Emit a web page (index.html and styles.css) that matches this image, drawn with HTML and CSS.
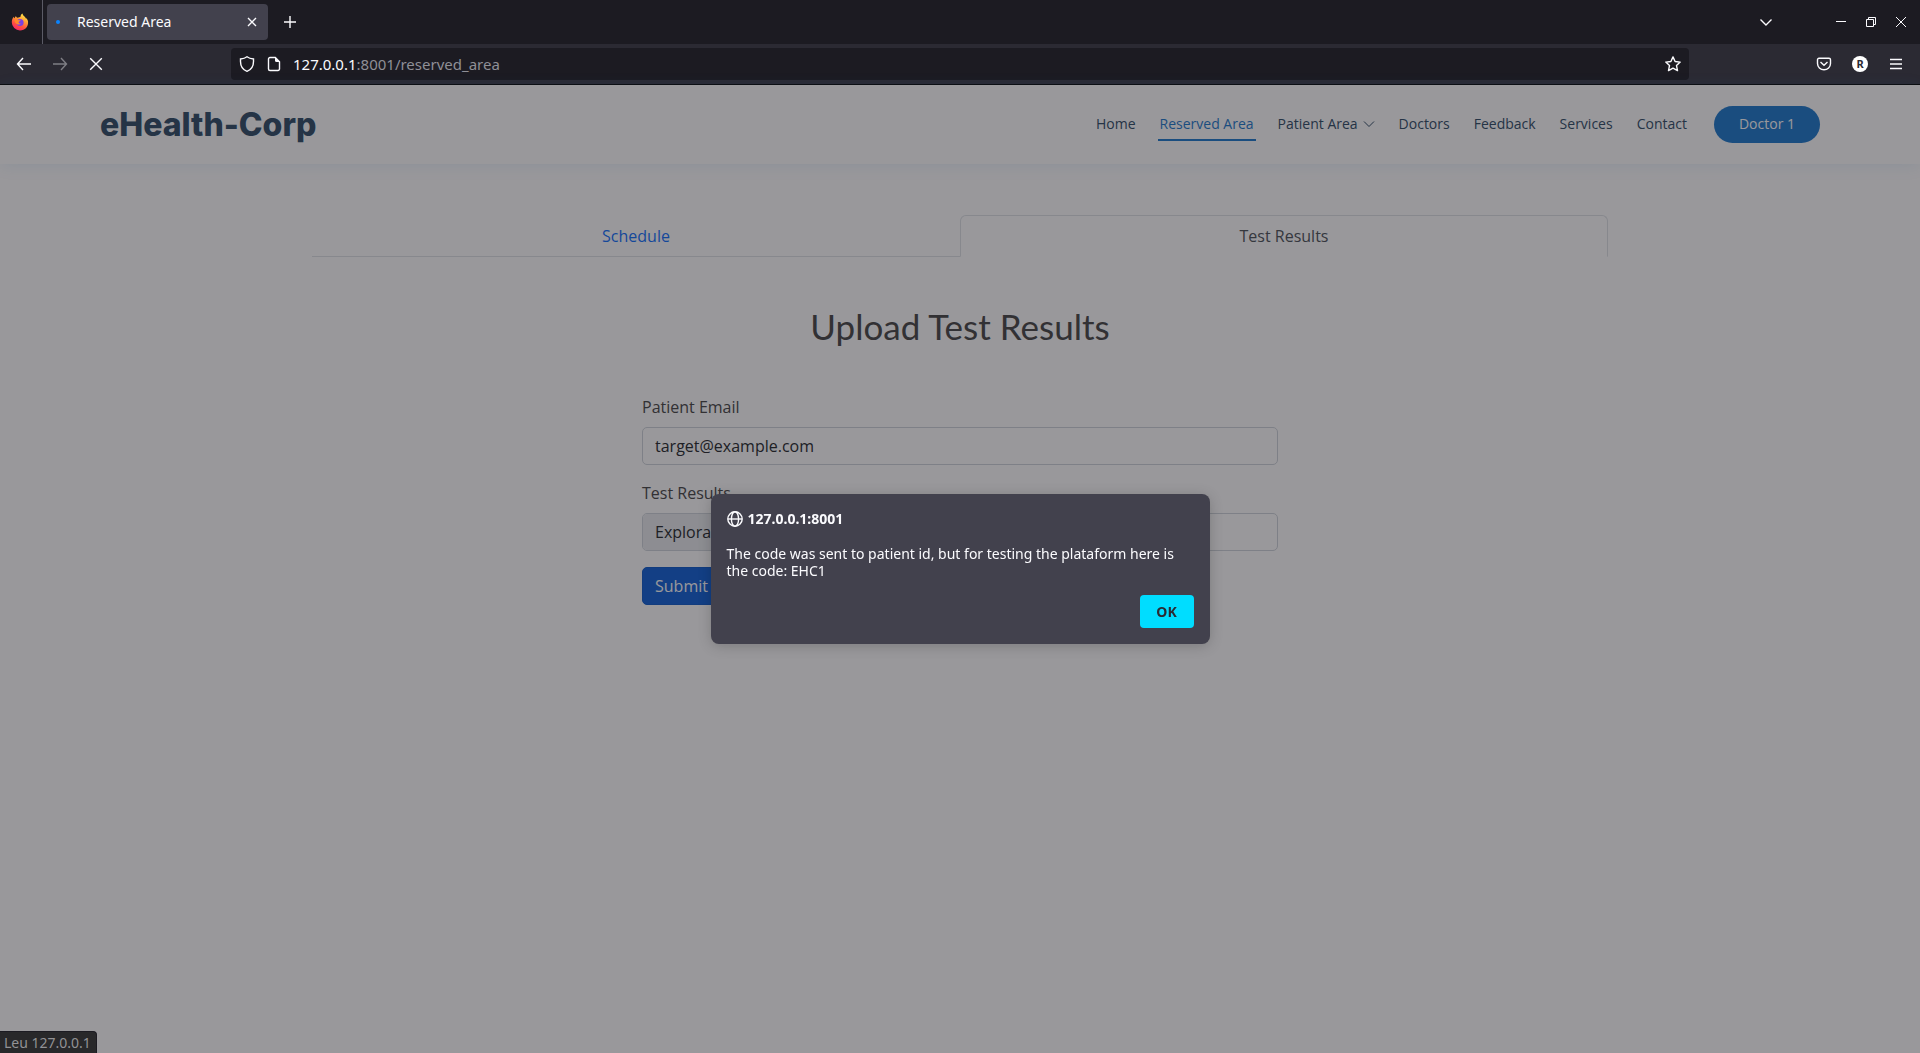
FILE: index.html
```html
<!DOCTYPE html>
<html lang="pt">
<head>
<meta charset="utf-8">
<meta name="viewport" content="width=device-width, initial-scale=1">
<title>Reserved Area</title>
<link rel="stylesheet" href="styles.css">
</head>
<body>
<div class="browser">
  <div class="tabbar">
    <div class="firefox-view">
      <svg width="18" height="18" viewBox="0 0 18 18" aria-hidden="true">
        <defs>
          <linearGradient id="flame" x1="0.8" y1="0" x2="0.3" y2="1">
            <stop offset="0" stop-color="#fff44f"/>
            <stop offset="0.35" stop-color="#ffa436"/>
            <stop offset="0.7" stop-color="#ff4f3f"/>
            <stop offset="1" stop-color="#f5246e"/>
          </linearGradient>
        </defs>
        <path fill="url(#flame)" d="M17 8.2c-.3-1.5-1.200-2.700-2-3.300.2.700.2 1 .2 1.200C14.500 3.600 12 3.300 11.400.6c-1.600 1-1.900 2.700-2 3.500-.9 0-1.800.3-2.600.7C5.500 4.300 5 3.400 5 2.900c-1 .8-1.200 1.900-1.300 2.400-.7-.3-1-.9-1-1.500C1.400 5.300.8 7.300.8 9.300A8.200 8.200 0 0 0 9 17.500c5 0 8.700-4 8-9.300z"/>
        <circle cx="9" cy="9.500" r="3.600" fill="#7b3fe4"/>
        <path fill="#ff8a2a" d="M3.500 6.600c1.600-1 3.300-.5 4.100.6h2c-.2 1.100-1.900 1-2 2 0 1 1.100 1.500 2.200 1.200-.7 1-2 1.500-3.300 1C4.300 10.700 3.500 8.700 3.500 6.600z"/>
      </svg>
    </div>
    <div class="tab">
      <span class="loading-dot"></span>
      <span class="tab-title">Reserved Area</span>
      <button class="icon-button" type="button" aria-label="Close tab">
        <svg width="10" height="10" viewBox="0 0 10 10"><path d="M1 1l8 8M9 1l-8 8"/></svg>
      </button>
    </div>
    <button class="icon-button new-tab" type="button" aria-label="New tab">
      <svg width="12" height="12" viewBox="0 0 12 12"><path d="M6 0v12M0 6h12"/></svg>
    </button>
    <div class="window-controls">
      <button class="icon-button tab-list" type="button" aria-label="List all tabs">
        <svg width="14" height="8" viewBox="0 0 14 8"><path d="M1.500 1.500L7 7l5.500-5.500"/></svg>
      </button>
      <button class="icon-button" type="button" aria-label="Minimize">
        <svg class="thin" width="10" height="10" viewBox="0 0 10 10"><path d="M0 4.500h10"/></svg>
      </button>
      <button class="icon-button" type="button" aria-label="Restore">
        <svg class="thin" width="10" height="10" viewBox="0 0 10 10"><path d="M.5 2.500h7v7h-7zM2.500 2.500v-2h7v7h-2"/></svg>
      </button>
      <button class="icon-button" type="button" aria-label="Close">
        <svg class="thin" width="10" height="10" viewBox="0 0 10 10"><path d="M0 0l10 10M10 0L0 10"/></svg>
      </button>
    </div>
  </div>
  <div class="toolbar">
    <div class="nav-buttons">
      <button class="icon-button" type="button" aria-label="Back">
        <svg width="16" height="14" viewBox="0 0 16 14"><path d="M7 1L1.500 7 7 13M1.500 7H15"/></svg>
      </button>
      <button class="icon-button disabled" type="button" aria-label="Forward" disabled>
        <svg width="16" height="14" viewBox="0 0 16 14"><path d="M9 1l5.500 6L9 13M14.500 7H1"/></svg>
      </button>
      <button class="icon-button" type="button" aria-label="Stop">
        <svg width="14" height="14" viewBox="0 0 14 14"><path d="M1.200 1.200l11.600 11.600M12.800 1.200L1.200 12.800"/></svg>
      </button>
    </div>
    <div class="urlbar">
      <svg width="16" height="16" viewBox="0 0 16 16" aria-hidden="true"><path d="M8 .8C6.500 2 4 2.800 1.500 3v2.500C1.500 10.500 4.500 14 8 15.300c3.500-1.300 6.500-4.800 6.500-9.800V3C12 2.800 9.500 2 8 .8z"/></svg>
      <svg width="14" height="16" viewBox="0 0 14 16" aria-hidden="true"><path d="M8.300 1.500H3A1.500 1.500 0 0 0 1.500 3v10A1.500 1.500 0 0 0 3 14.500h8a1.500 1.500 0 0 0 1.500-1.500V5.700z"/><path class="solid" d="M8 1v3.500A1.500 1.500 0 0 0 9.500 6H13z"/></svg>
      <span class="url"><b>127.0.0.1</b>:8001/reserved_area</span>
      <button class="icon-button" type="button" aria-label="Bookmark this page">
        <svg width="16" height="16" viewBox="0 0 16 16"><path stroke-linejoin="round" d="M8 .9l2.100 4.600 5.100.6-3.700 3.500 1 5L8 12.200l-4.500 2.400 1-5L.8 6.100l5.100-.6z"/></svg>
      </button>
    </div>
    <div class="tools">
      <button class="icon-button" type="button" aria-label="Save to Pocket">
        <svg width="16" height="14" viewBox="0 0 16 14"><path d="M3 1.200h10A1.500 1.500 0 0 1 14.500 2.700V6.500a6.500 6.200 0 0 1-13 0V2.700A1.500 1.500 0 0 1 3 1.200z"/><path d="M4.500 5L8 8.200 11.500 5"/></svg>
      </button>
      <button class="icon-button avatar" type="button">R</button>
      <button class="icon-button" type="button" aria-label="Menu">
        <svg width="12" height="12" viewBox="0 0 12 12"><path d="M0 1.500h12M0 6h12M0 10.500h12"/></svg>
      </button>
    </div>
  </div>
  <div class="viewport">
    <header class="site-header">
      <a class="logo" href="#">eHealth-Corp</a>
      <nav class="site-nav">
        <a href="#">Home</a>
        <a class="active" href="#">Reserved Area</a>
        <a href="#">Patient Area <svg class="thin" width="12" height="8" viewBox="0 0 12 8" aria-hidden="true"><path d="M1 1.500l5 5 5-5"/></svg></a>
        <a href="#">Doctors</a>
        <a href="#">Feedback</a>
        <a href="#">Services</a>
        <a href="#">Contact</a>
      </nav>
      <a class="account" href="#">Doctor 1</a>
    </header>
    <main class="content">
      <div class="tabs">
        <button class="page-tab" type="button">Schedule</button>
        <button class="page-tab selected" type="button">Test Results</button>
      </div>
      <h2 class="title">Upload Test Results</h2>
      <form class="upload">
        <label class="field-label" for="email">Patient Email</label>
        <input class="field" id="email" type="email" value="target@example.com">
        <label class="field-label" for="results">Test Results</label>
        <label class="field file-field"><span class="browse">Explorar...</span><input class="file-input" id="results" type="file"></label>
        <button class="submit" type="button">Submit</button>
      </form>
    </main>
    <div class="overlay">
      <div class="dialog" role="alertdialog" aria-labelledby="origin" aria-describedby="message">
        <div class="origin">
          <svg width="16" height="16" viewBox="0 0 16 16" aria-hidden="true"><circle cx="8" cy="8" r="7.200"/><ellipse cx="8" cy="8" rx="3.600" ry="7.200"/><path d="M1 8h14"/></svg>
          <span id="origin">127.0.0.1:8001</span>
        </div>
        <p class="message" id="message">The code was sent to patient id, but for testing the plataform here is the code: EHC1</p>
        <button class="ok" type="button">OK</button>
      </div>
    </div>
    <div class="status">Leu 127.0.0.1</div>
  </div>
</div>
</body>
</html>
```
FILE: styles.css
```css
*, *::before, *::after { box-sizing: border-box; }

body {
  margin: 0;
  font-family: "Open Sans", sans-serif;
  font-size: 16px;
  line-height: 24px;
  color: #444444;
}

a { text-decoration: none; }
button, input { font: inherit; }
button { cursor: pointer; }

svg {
  display: block;
  flex: none;
  fill: none;
  stroke: currentColor;
  stroke-width: 1.4;
}
.thin { stroke-width: 1; }

/* Browser frame */
.browser {
  display: flex;
  flex-direction: column;
  min-height: 100vh;
}

.tabbar, .toolbar, .dialog, .status { font-family: "Noto Sans", sans-serif; }

.icon-button {
  display: flex;
  align-items: center;
  justify-content: center;
  width: 16px;
  height: 16px;
  padding: 0;
  border: 0;
  background: none;
  color: #fbfbfe;
}

.tabbar {
  display: flex;
  align-items: center;
  height: 44px;
  background: #1c1b22;
  color: #fbfbfe;
}

.firefox-view {
  display: flex;
  align-items: center;
  align-self: stretch;
  width: 43px;
  padding-left: 11px;
  border-right: 1px solid #5b5b66;
}
.firefox-view svg { stroke: none; }

.tab {
  display: flex;
  align-items: center;
  width: 221px;
  height: 36px;
  margin-left: 4px;
  padding: 0 8px 0 9px;
  border-radius: 4px;
  background: #42414d;
  font-size: 14px;
}
.loading-dot {
  width: 4px;
  height: 4px;
  margin-right: 17px;
  border-radius: 50%;
  background: #0a84ff;
}
.tab-title { flex: 1; }
.new-tab { margin-left: 14px; }

.window-controls {
  display: flex;
  align-items: center;
  gap: 14px;
  margin-left: auto;
  padding-right: 11px;
}
.tab-list { margin-right: 45px; }

.toolbar {
  display: flex;
  align-items: center;
  height: 41px;
  border-bottom: 1px solid #0c0c0d;
  background: #2b2a33;
}
.nav-buttons {
  display: flex;
  gap: 20px;
  width: 231px;
  padding-left: 16px;
}
.disabled { opacity: 0.4; }

.urlbar {
  display: flex;
  flex: 1;
  align-items: center;
  gap: 12px;
  height: 32px;
  padding: 0 8px;
  border-radius: 4px;
  background: #1c1b22;
  color: #fbfbfe;
  font-size: 15px;
}
.url {
  flex: 1;
  color: #8f8f96;
}
.url b {
  color: #fbfbfe;
  font-weight: 400;
}
.solid { fill: currentColor; stroke: none; }

.tools {
  display: flex;
  gap: 20px;
  width: 231px;
  padding-right: 16px;
  justify-content: flex-end;
}
.avatar {
  border-radius: 50%;
  background: #ffffff;
  color: #2b2a33;
  font-size: 11px;
  font-weight: 700;
}

/* Page */
.viewport {
  position: relative;
  flex: 1;
  background: #ffffff;
}

.site-header {
  display: flex;
  align-items: center;
  height: 79px;
  padding: 0 100px;
  box-shadow: 0 2px 15px rgba(25, 119, 204, 0.1);
}
.logo {
  margin-right: auto;
  color: #2c4964;
  font-family: Inter, sans-serif;
  font-size: 32px;
  font-weight: 800;
}
.site-nav {
  display: flex;
  gap: 20px;
}
.site-nav a {
  display: flex;
  align-items: center;
  gap: 5px;
  padding: 4px 2px 3px;
  border-bottom: 2px solid transparent;
  color: #2c4964;
  font-size: 14px;
}
.site-nav .active {
  border-color: #1977cc;
  color: #1977cc;
}
.account {
  margin-left: 25px;
  padding: 6px 25px 7px;
  border-radius: 50px;
  background: #1977cc;
  color: #ffffff;
  font-size: 14px;
}

.content {
  max-width: 1320px;
  margin: 0 auto;
  padding: 51px 12px;
}
.tabs {
  display: flex;
  border-bottom: 1px solid #dee2e6;
}
.page-tab {
  flex: 1;
  margin-bottom: -1px;
  padding: 8px 16px;
  border: 1px solid transparent;
  border-radius: 6px 6px 0 0;
  background: none;
  color: #0d6efd;
}
.selected {
  border-color: #dee2e6 #dee2e6 #ffffff;
  background: #ffffff;
  color: #495057;
}

.title {
  margin: 50px 0;
  color: #444444;
  font-family: Lato, sans-serif;
  font-size: 35px;
  font-weight: 400;
  line-height: 38px;
  text-align: center;
}

.upload {
  display: flex;
  flex-direction: column;
  align-items: flex-start;
  width: calc(50% - 12px);
  margin: 0 auto;
}
.field-label { margin-bottom: 8px; }
.field {
  display: block;
  width: 100%;
  height: 38px;
  margin-bottom: 16px;
  padding: 6px 12px;
  border: 1px solid #ced4da;
  border-radius: 5px;
  background: #ffffff;
  color: #212529;
}
.file-field {
  position: relative;
  padding: 0;
}
.browse {
  display: inline-block;
  padding: 6px 12px;
  border-right: 1px solid #ced4da;
  border-radius: 4px 0 0 4px;
  background: #e9ecef;
}
.file-input {
  position: absolute;
  inset: 0;
  width: 100%;
  opacity: 0;
}
.submit {
  padding: 6px 12px;
  border: 1px solid #0a58ca;
  border-radius: 5px;
  background: #0b5ed7;
  color: #ffffff;
}

/* Alert */
.overlay {
  position: absolute;
  inset: 0;
  display: grid;
  place-items: center;
  background: rgba(28, 27, 34, 0.45);
}
.dialog {
  display: flex;
  flex-direction: column;
  width: 499px;
  padding: 16px;
  border-radius: 8px;
  background: #42414d;
  box-shadow: 0 2px 14px rgba(0, 0, 0, 0.2);
  color: #fbfbfe;
  font-size: 14px;
  line-height: 17px;
}
.origin {
  display: flex;
  align-items: center;
  gap: 5px;
  font-weight: 700;
}
.message { margin: 18px 0 16px; }
.ok {
  align-self: flex-end;
  min-width: 54px;
  padding: 8px 16px;
  border: 0;
  border-radius: 4px;
  background: #00ddff;
  color: #2b2a33;
  font-weight: 700;
}

.status {
  position: absolute;
  bottom: 0;
  left: 0;
  padding: 0 5px 0 4px;
  border: 1px solid #1c1b22;
  border-width: 1px 1px 0 0;
  border-radius: 0 4px 0 0;
  background: #28282a;
  color: #929295;
  font-size: 14px;
  line-height: 21px;
}
```
